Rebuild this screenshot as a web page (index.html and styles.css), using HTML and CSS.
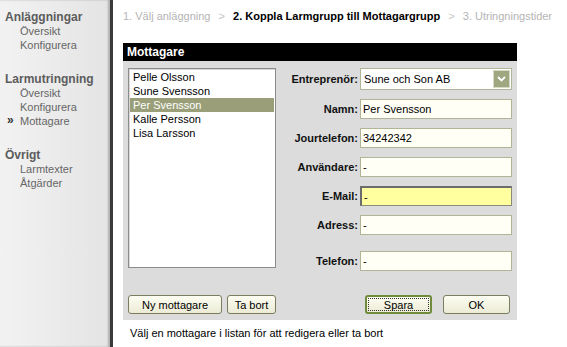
FILE: index.html
```html
<!DOCTYPE html>
<html lang="sv">
<head>
    <meta charset="UTF-8">
    <title>Mottagare</title>
    <link rel="stylesheet" href="styles.css">
</head>
<body>
    <div class="sidebar">
        <div class="nav-group">
            <div class="nav-head">Anläggningar</div>
            <a class="nav-item">Översikt</a>
            <a class="nav-item">Konfigurera</a>
        </div>
        <div class="nav-group">
            <div class="nav-head">Larmutringning</div>
            <a class="nav-item">Översikt</a>
            <a class="nav-item">Konfigurera</a>
            <a class="nav-item active"><span class="marker">&raquo;</span>Mottagare</a>
        </div>
        <div class="nav-group">
            <div class="nav-head">Övrigt</div>
            <a class="nav-item">Larmtexter</a>
            <a class="nav-item">Åtgärder</a>
        </div>
    </div>

    <div class="main">
        <div class="steps">
            <span class="step">1. Välj anläggning</span>
            <span class="sep">&gt;</span>
            <span class="step current">2. Koppla Larmgrupp till Mottagargrupp</span>
            <span class="sep">&gt;</span>
            <span class="step">3. Utringningstider</span>
        </div>

        <div class="panel">
            <div class="panel-title">Mottagare</div>
            <div class="panel-body">
                <div class="top-row">
                    <ul class="listbox">
                        <li>Pelle Olsson</li>
                        <li>Sune Svensson</li>
                        <li class="selected">Per Svensson</li>
                        <li>Kalle Persson</li>
                        <li>Lisa Larsson</li>
                    </ul>

                    <div class="form">
                        <label>Entreprenör:</label>
                        <div class="select">
                            <span>Sune och Son AB</span>
                            <span class="select-btn">
                                <svg width="9" height="6" viewBox="0 0 9 6"><path d="M1 1 L4.5 4.5 L8 1" fill="none" stroke="#fff" stroke-width="1.8"/></svg>
                            </span>
                        </div>

                        <label>Namn:</label>
                        <input type="text" value="Per Svensson">

                        <label>Jourtelefon:</label>
                        <input type="text" value="34242342">

                        <label>Användare:</label>
                        <input type="text" value="-">

                        <label>E-Mail:</label>
                        <input type="text" class="focused" value="-">

                        <label>Adress:</label>
                        <input type="text" value="-">

                        <label class="spaced">Telefon:</label>
                        <input type="text" class="spaced" value="-">
                    </div>
                </div>

                <div class="btn-row">
                    <div class="btn-group">
                        <button class="btn wide">Ny mottagare</button>
                        <button class="btn">Ta bort</button>
                    </div>
                    <div class="btn-group right">
                        <button class="btn default"><span class="focus">Spara</span></button>
                        <button class="btn">OK</button>
                    </div>
                </div>
            </div>
        </div>

        <div class="hint">Välj en mottagare i listan för att redigera eller ta bort</div>
    </div>
</body>
</html>
```

FILE: styles.css
```css
body {
    margin: 0;
    font-family: "Liberation Sans", Arial, sans-serif;
    font-size: 11px;
    background-color: #fff;
    display: flex;
    height: 100vh;
    overflow: hidden;
}

/* left menu */
.sidebar {
    width: 110px;
    padding-top: 10px;
    background: linear-gradient(to right, #f2f2f2, #e4e4e4);
    border-right: 3px solid #3a3a3a;
    box-shadow: inset -2px 0 2px #b0b0b0;
    box-sizing: content-box;
}

.nav-group {
    margin-bottom: 20px;
}

.nav-head {
    font-size: 12px;
    font-weight: bold;
    color: #5c5c5c;
    line-height: 14px;
    padding-left: 5px;
}

.nav-item {
    display: block;
    color: #666;
    line-height: 14px;
    padding-left: 20px;
    position: relative;
}

.nav-item .marker {
    position: absolute;
    left: 7px;
    top: -1px;
    font-weight: bold;
    font-size: 12px;
    color: #333;
}

/* main area */
.main {
    padding-left: 10px;
}

.steps {
    padding-top: 9px;
    line-height: 14px;
    height: 14px;
    white-space: nowrap;
    color: #b4b4b4;
}

.steps .sep {
    margin: 0 5px;
    color: #c4c4c4;
}

.steps .current {
    color: #000;
    font-weight: bold;
}

.panel {
    width: 394px;
    margin-top: 20px;
}

.panel-title {
    background-color: #000;
    color: #fff;
    font-weight: bold;
    font-size: 12px;
    height: 18px;
    line-height: 18px;
    padding-left: 4px;
}

.panel-body {
    background-color: #dcdcdc;
    height: 259px;
    padding: 7px 5px 0 5px;
    box-sizing: border-box;
}

.top-row {
    display: flex;
    justify-content: space-between;
}

.listbox {
    list-style: none;
    margin: 0;
    padding: 1px;
    width: 148px;
    height: 200px;
    box-sizing: border-box;
    background-color: #fff;
    border: 1px solid #8c8c8c;
    box-shadow: inset 1px 1px 0 #d8d8d8;
}

.listbox li {
    line-height: 14px;
    padding-left: 3px;
    color: #000;
}

.listbox li.selected {
    background-color: #9a9f79;
    color: #fff;
}

.form {
    display: grid;
    grid-template-columns: 80px 152px;
    column-gap: 2px;
    row-gap: 9px;
}

.form label {
    font-weight: bold;
    text-align: right;
    align-self: center;
    color: #111;
}

.form input,
.select {
    height: 20px;
    box-sizing: border-box;
    border: 1px solid #b1b597;
    background-color: #fffff6;
    font-family: inherit;
    font-size: 11px;
    padding: 0 2px;
    margin: 0;
    color: #000;
}

.form input.focused {
    background-color: #ffffa0;
    border-color: #8a8a7a;
    border-top: 2px solid #6c6c6c;
    border-left: 2px solid #6c6c6c;
}

.form .spaced {
    margin-top: 7px;
}

.select {
    height: 22px;
    display: flex;
    align-items: center;
    justify-content: space-between;
    background-color: #fff;
    padding: 0 1px 0 3px;
}

.select-btn {
    width: 15px;
    height: 16px;
    background-color: #9ea780;
    border: 1px solid #d4d8c4;
    display: flex;
    align-items: center;
    justify-content: center;
}

.btn-row {
    display: flex;
    justify-content: space-between;
    margin-top: 24px;
    padding-right: 2px;
}

.btn-group {
    display: flex;
    gap: 5px;
}

.btn-group.right {
    gap: 11px;
}

.btn {
    font-family: inherit;
    font-size: 11px;
    height: 19px;
    width: 49px;
    padding: 0;
    color: #000;
    background: linear-gradient(#fdfdf2, #ebebd6);
    border: 1px solid #7c7c60;
    border-radius: 3px;
    cursor: pointer;
}

.btn.wide {
    width: 94px;
}

.btn-group.right .btn {
    width: 67px;
}

.btn.default {
    border: 2px solid #6f8c3c;
    padding: 1px;
}

.btn .focus {
    display: block;
    height: 100%;
    line-height: 13px;
    border: 1px dotted #333;
    box-sizing: border-box;
}

.hint {
    margin-top: 6px;
    padding-left: 7px;
    line-height: 14px;
    color: #000;
}
```
